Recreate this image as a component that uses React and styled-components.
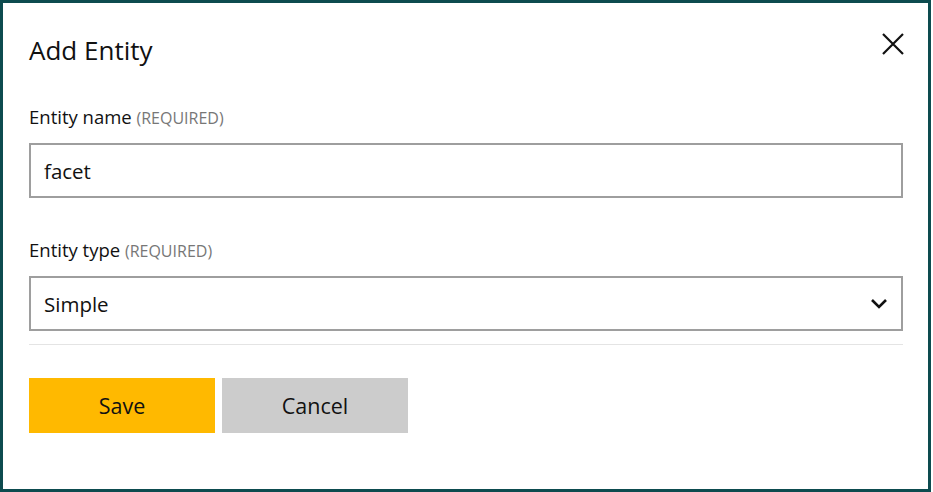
import React from 'react'
import styled, { createGlobalStyle } from 'styled-components'

const GlobalStyle = createGlobalStyle`
    body {
        margin: 0;
        background: #ffffff;
        font-family: "Open Sans", "Noto Sans", sans-serif;
    }
`

const Dialog = styled.div`
    box-sizing: border-box;
    width: 931px;
    height: 492px;
    border: 3px solid #0d4b4f;
    background: #ffffff;
    padding: 0 25px 0 26px;
    display: flex;
    flex-direction: column;
`

const Header = styled.div`
    display: flex;
    align-items: center;
    justify-content: space-between;
    height: 94px;
`

const Title = styled.h1`
    margin: 0;
    font-size: 26px;
    font-weight: 400;
    color: #111;
`

const CloseButton = styled.button`
    border: none;
    background: none;
    padding: 0;
    margin: 0 -5px 12px 0;
    width: 30px;
    height: 30px;
    display: flex;
    align-items: center;
    justify-content: center;
    cursor: pointer;
`

const Field = styled.div`
    display: flex;
    flex-direction: column;
    margin-top: ${p => p.$top}px;
`

const Label = styled.label`
    font-size: 18.5px;
    color: #111;
    line-height: 24px;
    margin-bottom: 13px;

    span {
        font-size: 16px;
        color: #777;
    }
`

const Input = styled.div`
    box-sizing: border-box;
    height: 55px;
    border: 2px solid #9e9e9e;
    padding: 0 13px;
    display: flex;
    align-items: center;
    justify-content: space-between;
    font-size: 20.5px;
    color: #111;
`

const Divider = styled.hr`
    margin: 13px 0 0;
    border: none;
    border-top: 1px solid #e4e4e4;
`

const Actions = styled.div`
    display: flex;
    gap: 7px;
    margin-top: 33px;
`

const Button = styled.button`
    width: 186px;
    height: 55px;
    border: none;
    font-family: inherit;
    font-size: 21.5px;
    color: #111;
    background: ${p => p.$primary ? '#ffb900' : '#cccccc'};
    cursor: pointer;
`

export default function App() {
    return (
        <>
            <GlobalStyle />
            <Dialog>
                <Header>
                    <Title>Add Entity</Title>
                    <CloseButton aria-label="Close">
                        <svg width="24" height="24" viewBox="0 0 24 24">
                            <path d="M2 2 L22 22 M22 2 L2 22" stroke="#111" strokeWidth="2.2" fill="none" />
                        </svg>
                    </CloseButton>
                </Header>
                <Field $top={8}>
                    <Label>Entity name <span>(REQUIRED)</span></Label>
                    <Input>facet</Input>
                </Field>
                <Field $top={40}>
                    <Label>Entity type <span>(REQUIRED)</span></Label>
                    <Input>
                        Simple
                        <svg width="18" height="12" viewBox="0 0 18 12">
                            <path d="M2 2 L9 9 L16 2" stroke="#111" strokeWidth="2.6" fill="none" />
                        </svg>
                    </Input>
                </Field>
                <Divider />
                <Actions>
                    <Button $primary>Save</Button>
                    <Button>Cancel</Button>
                </Actions>
            </Dialog>
        </>
    )
}
